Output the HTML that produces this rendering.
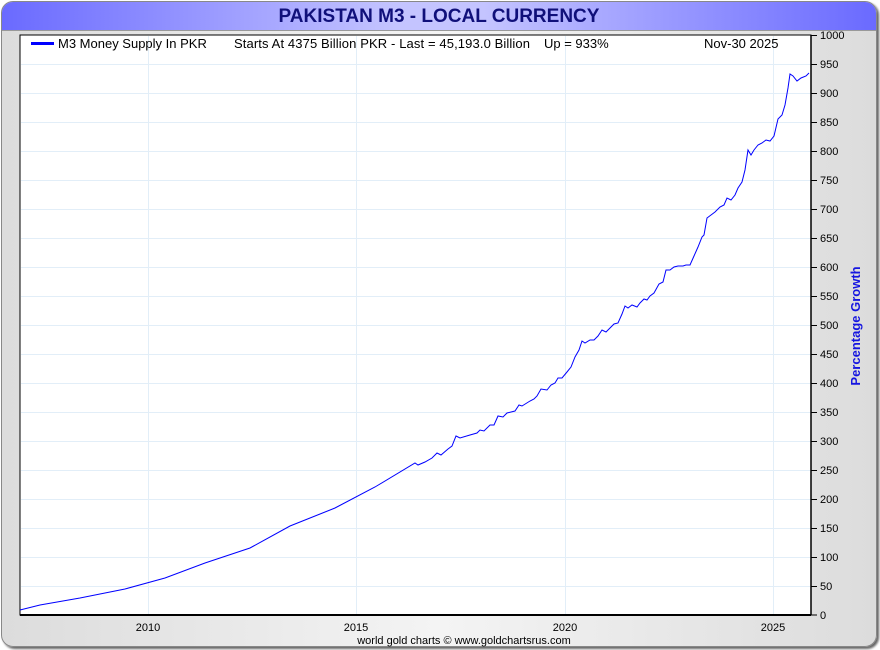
<!DOCTYPE html>
<html><head><style>
body{margin:0;width:880px;height:650px;background:#fff;font-family:"Liberation Sans",sans-serif;overflow:hidden}
.frame{position:absolute;left:1px;top:1px;width:874px;height:644px;border:1px solid #888;border-radius:12px;background:linear-gradient(90deg,#dcdcdc,#f4f4f4 50%,#dcdcdc);box-shadow:2px 2px 2px #666;overflow:hidden}
.title{position:absolute;left:0;top:0;width:874px;height:28px;background:linear-gradient(90deg,#6a6aff,#c4c4ff 45%,#c4c4ff 55%,#6a6aff);border-bottom:1px solid #999;text-align:center;font-weight:bold;font-size:19px;color:#10107a;line-height:29px}
</style></head><body>
<div class="frame"><div class="title">PAKISTAN M3 - LOCAL CURRENCY</div></div>
<svg width="880" height="650" style="position:absolute;left:0;top:0" font-family="Liberation Sans, sans-serif">
<rect x="20" y="35" width="791" height="580" fill="#fff" stroke="#000" stroke-width="1"/>
<g stroke="#e2eef8" stroke-width="1">
<line x1="148.5" y1="36" x2="148.5" y2="614"/><line x1="356.5" y1="36" x2="356.5" y2="614"/><line x1="565.5" y1="36" x2="565.5" y2="614"/><line x1="773.5" y1="36" x2="773.5" y2="614"/>
</g>
<g stroke="#e2eef8">
<line x1="21" x2="810" y1="64.5" y2="64.5"/><line x1="21" x2="810" y1="93.5" y2="93.5"/><line x1="21" x2="810" y1="122.5" y2="122.5"/><line x1="21" x2="810" y1="151.5" y2="151.5"/><line x1="21" x2="810" y1="180.5" y2="180.5"/><line x1="21" x2="810" y1="209.5" y2="209.5"/><line x1="21" x2="810" y1="238.5" y2="238.5"/><line x1="21" x2="810" y1="267.5" y2="267.5"/><line x1="21" x2="810" y1="296.5" y2="296.5"/><line x1="21" x2="810" y1="325.5" y2="325.5"/><line x1="21" x2="810" y1="354.5" y2="354.5"/><line x1="21" x2="810" y1="383.5" y2="383.5"/><line x1="21" x2="810" y1="412.5" y2="412.5"/><line x1="21" x2="810" y1="441.5" y2="441.5"/><line x1="21" x2="810" y1="470.5" y2="470.5"/><line x1="21" x2="810" y1="499.5" y2="499.5"/><line x1="21" x2="810" y1="528.5" y2="528.5"/><line x1="21" x2="810" y1="557.5" y2="557.5"/><line x1="21" x2="810" y1="586.5" y2="586.5"/>
</g>
<line x1="20" y1="615" x2="811" y2="615" stroke="#000" stroke-width="2"/>
<line x1="811" y1="35" x2="811" y2="615" stroke="#000" stroke-width="1.5"/>
<g stroke="#000">
<line x1="811" x2="817" y1="35.5" y2="35.5"/><line x1="811" x2="817" y1="64.5" y2="64.5"/><line x1="811" x2="817" y1="93.5" y2="93.5"/><line x1="811" x2="817" y1="122.5" y2="122.5"/><line x1="811" x2="817" y1="151.5" y2="151.5"/><line x1="811" x2="817" y1="180.5" y2="180.5"/><line x1="811" x2="817" y1="209.5" y2="209.5"/><line x1="811" x2="817" y1="238.5" y2="238.5"/><line x1="811" x2="817" y1="267.5" y2="267.5"/><line x1="811" x2="817" y1="296.5" y2="296.5"/><line x1="811" x2="817" y1="325.5" y2="325.5"/><line x1="811" x2="817" y1="354.5" y2="354.5"/><line x1="811" x2="817" y1="383.5" y2="383.5"/><line x1="811" x2="817" y1="412.5" y2="412.5"/><line x1="811" x2="817" y1="441.5" y2="441.5"/><line x1="811" x2="817" y1="470.5" y2="470.5"/><line x1="811" x2="817" y1="499.5" y2="499.5"/><line x1="811" x2="817" y1="528.5" y2="528.5"/><line x1="811" x2="817" y1="557.5" y2="557.5"/><line x1="811" x2="817" y1="586.5" y2="586.5"/><line x1="811" x2="817" y1="615" y2="615"/>
</g>
<g font-size="11" fill="#000">
<text x="820" y="39">1000</text><text x="820" y="68">950</text><text x="820" y="97">900</text><text x="820" y="126">850</text><text x="820" y="155">800</text><text x="820" y="184">750</text><text x="820" y="213">700</text><text x="820" y="242">650</text><text x="820" y="271">600</text><text x="820" y="300">550</text><text x="820" y="329">500</text><text x="820" y="358">450</text><text x="820" y="387">400</text><text x="820" y="416">350</text><text x="820" y="445">300</text><text x="820" y="474">250</text><text x="820" y="503">200</text><text x="820" y="532">150</text><text x="820" y="561">100</text><text x="820" y="590">50</text><text x="820" y="619">0</text>
<text x="148" y="631" text-anchor="middle">2010</text><text x="356" y="631" text-anchor="middle">2015</text><text x="565" y="631" text-anchor="middle">2020</text><text x="773" y="631" text-anchor="middle">2025</text>
<text x="464" y="644" text-anchor="middle">world gold charts © www.goldchartsrus.com</text>
</g>
<text transform="translate(860,326) rotate(-90)" text-anchor="middle" font-size="13" font-weight="bold" fill="#1515e0">Percentage Growth</text>
<line x1="31" y1="43.5" x2="54" y2="43.5" stroke="#0000ff" stroke-width="3"/>
<g font-size="13" fill="#000">
<text x="58" y="48">M3 Money Supply In PKR</text>
<text x="234" y="48" textLength="296">Starts At 4375 Billion PKR - Last = 45,193.0 Billion</text>
<text x="544" y="48">Up = 933%</text>
<text x="704" y="48">Nov-30  2025</text>
</g>
<polyline fill="none" stroke="#0000ff" stroke-width="1" points="20,610 40,605 80,598 125,589 165,578 205,563 250,548 290,526 335,508 375,487 415,463 418,465 425,462 432,458 437,453 441,455 448,449 452,446 456,436 460,438 470,435 477,433 480,430 484,431 490,425 494,425 498,416 503,417 507,413 515,411 519,405 522,406 530,401 534,399 537,396 541,389 547,390 551,385 555,383 558,378 562,378 567,372 571,367 575,357 579,350 582,341 585,343 590,340 594,340 598,336 602,330 606,332 610,328 614,324 618,323 622,314 625,306 628,308 632,305 637,307 640,303 644,299 647,300 650,296 654,293 659,284 663,282 666,270 670,270 674,267 678,266 683,266 686,265 690,265 694,256 698,247 702,237 704,235 707,218 711,215 715,212 720,207 724,205 727,198 731,200 735,195 738,188 742,182 745,170 748,150 751,155 754,150 758,145 762,143 766,140 770,141 774,136 778,119 782,115 785,105 788,88 790,74 793,76 797,81 801,78 806,76 809,73"/>
</svg>
</body></html>
